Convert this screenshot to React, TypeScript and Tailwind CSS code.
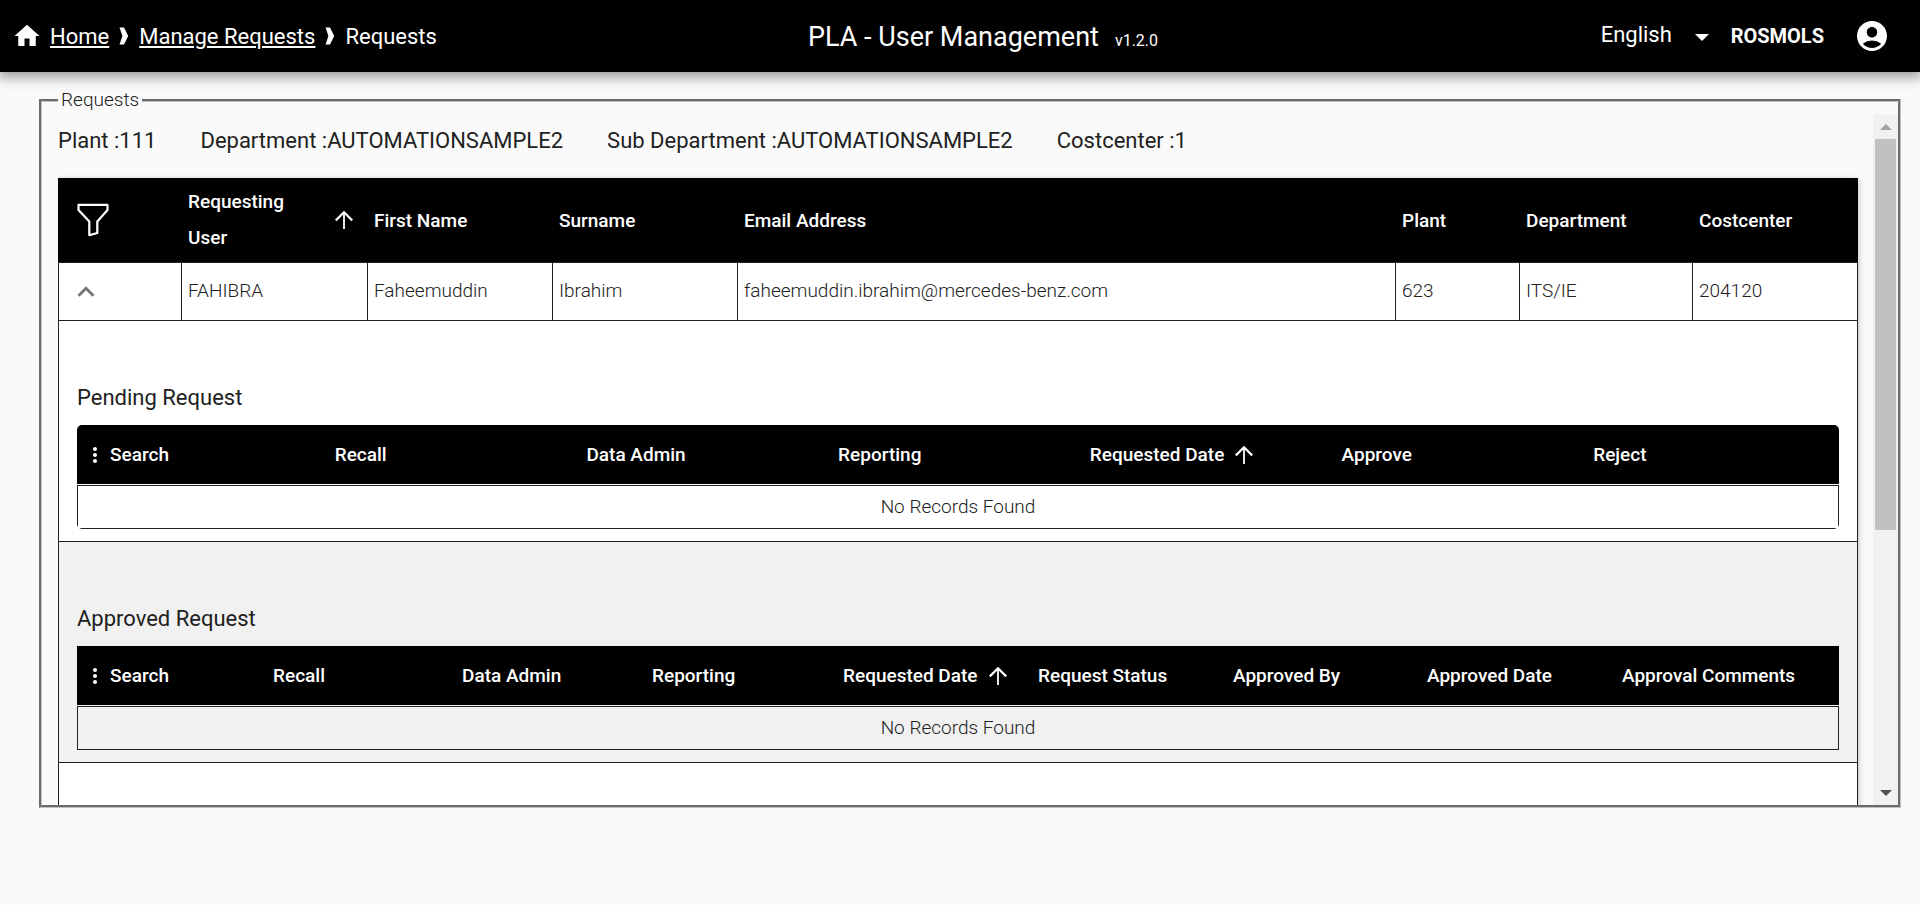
import { useState } from "react";
import { MdAccountCircle, MdExpandLess, MdHome, MdMoreVert } from "react-icons/md";

const details = [
  { label: "Plant", value: "111" },
  { label: "Department", value: "AUTOMATIONSAMPLE2" },
  { label: "Sub Department", value: "AUTOMATIONSAMPLE2" },
  { label: "Costcenter", value: "1" },
];

const requestColumns = [
  { label: "First Name", width: "w-[185px]" },
  { label: "Surname", width: "w-[185px]" },
  { label: "Email Address", width: "" },
  { label: "Plant", width: "w-[124px]" },
  { label: "Department", width: "w-[173px]" },
  { label: "Costcenter", width: "w-[165px]" },
];

const requestRow = [
  "FAHIBRA",
  "Faheemuddin",
  "Ibrahim",
  "faheemuddin.ibrahim@mercedes-benz.com",
  "623",
  "ITS/IE",
  "204120",
];

type Column = { label: string; width: string; sorted?: boolean };

const pendingColumns: Column[] = [
  { label: "Search", width: "w-1/7" },
  { label: "Recall", width: "w-1/7" },
  { label: "Data Admin", width: "w-1/7" },
  { label: "Reporting", width: "w-1/7" },
  { label: "Requested Date", width: "w-1/7", sorted: true },
  { label: "Approve", width: "w-1/7" },
  { label: "Reject", width: "w-1/7" },
];

const approvedColumns: Column[] = [
  { label: "Search", width: "w-[190px]" },
  { label: "Recall", width: "w-[189px]" },
  { label: "Data Admin", width: "w-[190px]" },
  { label: "Reporting", width: "w-[191px]" },
  { label: "Requested Date", width: "w-[195px]", sorted: true },
  { label: "Request Status", width: "w-[195px]" },
  { label: "Approved By", width: "w-[194px]" },
  { label: "Approved Date", width: "w-[195px]" },
  { label: "Approval Comments", width: "" },
];

function Separator() {
  return (
    <svg viewBox="0 0 10 18" className="h-[18px] w-[10px] fill-white" aria-hidden="true">
      <path d="M0.5 0.5H5L9.2 9L5 17.5H0.5L3.4 9Z" />
    </svg>
  );
}

function SortArrow() {
  return (
    <svg viewBox="0 0 20 20" className="size-5 shrink-0 fill-none stroke-white" aria-hidden="true">
      <path d="M10 2.5V19" strokeWidth="1.8" />
      <path d="M1.8 10.4L10 2.2L18.2 10.4" strokeWidth="2.2" />
    </svg>
  );
}

function FilterIcon() {
  return (
    <svg viewBox="0 0 32 34" className="h-[34px] w-8 fill-none stroke-white" aria-hidden="true">
      <path
        d="M1.5 1.8H30.5V7L20.3 18.5V30L12.3 32.2V18.5L1.5 7Z"
        strokeWidth="2.2"
        strokeLinejoin="round"
      />
    </svg>
  );
}

function RequestSection({
  title,
  columns,
  rounded,
  shaded,
}: {
  title: string;
  columns: Column[];
  rounded?: boolean;
  shaded?: boolean;
}) {
  return (
    <section
      className={`border-b border-[#212121] px-[18px] pt-[61px] pb-3 ${shaded ? "bg-[#f1f1f1]" : "bg-white"}`}
    >
      <h2 className="mb-[11px] text-[22px] leading-8 text-[#212121]">{title}</h2>
      <div className={rounded ? "overflow-hidden rounded-[5px]" : ""}>
        <table className="w-full table-fixed border-separate border-spacing-0">
          <thead className="bg-black text-[19px] leading-6 text-white">
            <tr>
              {columns.map((column, index) => (
                <th
                  key={column.label}
                  scope="col"
                  className={`h-[59px] px-[6px] text-left font-medium whitespace-nowrap ${column.width}`}
                >
                  <span className="flex items-center">
                    {index === 0 && (
                      <button type="button" aria-label="Column menu" className="mr-[3px]">
                        <MdMoreVert className="size-6" />
                      </button>
                    )}
                    {column.label}
                    {column.sorted && (
                      <span className="ml-[10px]">
                        <SortArrow />
                      </span>
                    )}
                  </span>
                </th>
              ))}
            </tr>
          </thead>
          <tbody>
            <tr>
              <td colSpan={columns.length} className="pt-px">
                <div className="flex h-11 items-center justify-center border border-[#212121] text-[19px] font-light text-[#212121]">
                  No Records Found
                </div>
              </td>
            </tr>
          </tbody>
        </table>
      </div>
    </section>
  );
}

export default function App() {
  const [language, setLanguage] = useState("English");

  return (
    <div className="min-h-screen bg-[#fafafa] font-['Roboto',sans-serif] text-[#212121]">
      <header className="relative grid h-[72px] grid-cols-[1fr_auto_1fr] items-center bg-black pr-[30px] pl-3 text-[22px] text-white shadow-[0_3px_12px_2px_rgba(0,0,0,0.4)]">
        <nav aria-label="Breadcrumb" className="flex items-center whitespace-nowrap">
          <MdHome className="mr-2 size-[30px]" />
          <a href="#home" className="underline underline-offset-2">
            Home
          </a>
          <span className="mx-[10px]">
            <Separator />
          </span>
          <a href="#manage" className="underline underline-offset-2">
            Manage Requests
          </a>
          <span className="mx-[10px]">
            <Separator />
          </span>
          <span>Requests</span>
        </nav>
        <div className="ml-16 flex items-baseline pt-px whitespace-nowrap">
          <h1 className="text-[27px] leading-9">PLA - User Management</h1>
          <span className="ml-4 text-base">v1.2.0</span>
        </div>
        <div className="flex items-center justify-end">
          <div className="relative mr-[22px] mb-1">
            <select
              aria-label="Language"
              value={language}
              onChange={(event) => setLanguage(event.target.value)}
              className="w-[108px] appearance-none bg-black text-white"
            >
              <option>English</option>
            </select>
            <svg
              viewBox="0 0 14 7"
              className="pointer-events-none absolute top-1/2 right-0 h-[7px] w-[14px] fill-white"
              aria-hidden="true"
            >
              <path d="M0 0H14L7 7Z" />
            </svg>
          </div>
          <span className="mr-[30px] text-[20px] font-bold">ROSMOLS</span>
          <button type="button" aria-label="Account">
            <MdAccountCircle className="size-9" />
          </button>
        </div>
      </header>

      <main className="pt-[17px] pr-[19px] pl-[39px]">
        <fieldset className="min-w-0 border-[3px] border-[#c0c0c0] pl-4 [border-style:groove]">
          <legend className="px-[3px] text-[19px] leading-[22px] font-light">Requests</legend>
          <div className="flex h-[694px] items-end">
            <div className="h-[691px] min-w-0 flex-1 overflow-hidden pr-[15px]">
              <div className="mb-[23px] flex gap-11 pt-[13px] text-[22px] leading-7 whitespace-nowrap">
                {details.map((detail) => (
                  <span key={detail.label}>
                    {detail.label} :{detail.value}
                  </span>
                ))}
              </div>
              <div className="shadow-[0_2px_6px_rgba(0,0,0,0.3)]">
                <table className="w-full table-fixed border-separate border-spacing-0 text-[19px]">
                  <thead className="bg-black text-white">
                    <tr className="h-[84px] text-left">
                      <th scope="col" className="w-[124px] pl-[19px]">
                        <button type="button" aria-label="Filter" className="block">
                          <FilterIcon />
                        </button>
                      </th>
                      <th scope="col" className="w-[186px] pl-[6px] font-medium">
                        <span className="flex items-center justify-between pr-[14px] leading-9">
                          <span className="w-24">Requesting User</span>
                          <SortArrow />
                        </span>
                      </th>
                      {requestColumns.map((column) => (
                        <th
                          key={column.label}
                          scope="col"
                          className={`pt-[2px] pl-[6px] font-medium ${column.width}`}
                        >
                          {column.label}
                        </th>
                      ))}
                    </tr>
                  </thead>
                  <tbody className="bg-white">
                    <tr className="h-[59px] font-light">
                      <td className="border border-[#212121] pl-[10px]">
                        <button type="button" aria-label="Collapse row" className="block text-[#757575]">
                          <MdExpandLess className="size-[34px]" />
                        </button>
                      </td>
                      {requestRow.map((value) => (
                        <td key={value} className="border-y border-r border-[#212121] pl-[6px]">
                          {value}
                        </td>
                      ))}
                    </tr>
                  </tbody>
                </table>
                <div className="border-x border-[#212121] bg-white">
                  <RequestSection title="Pending Request" columns={pendingColumns} rounded />
                  <RequestSection title="Approved Request" columns={approvedColumns} shaded />
                  <div className="h-[220px]" />
                </div>
              </div>
            </div>
            <div
              className="flex h-[691px] w-[25px] flex-col items-center justify-between bg-[#f1f1f1]"
              aria-hidden="true"
            >
              <div className="flex w-full flex-col items-center">
                <div className="flex h-[25px] items-center">
                  <svg viewBox="0 0 12 6" className="h-[6px] w-3 fill-[#a3a3a3]">
                    <path d="M6 0L12 6H0Z" />
                  </svg>
                </div>
                <div className="h-[391px] w-[21px] bg-[#c1c1c1]" />
              </div>
              <div className="flex h-[25px] items-center">
                <svg viewBox="0 0 12 6" className="h-[6px] w-3 fill-[#505050]">
                  <path d="M0 0H12L6 6Z" />
                </svg>
              </div>
            </div>
          </div>
        </fieldset>
      </main>
    </div>
  );
}
